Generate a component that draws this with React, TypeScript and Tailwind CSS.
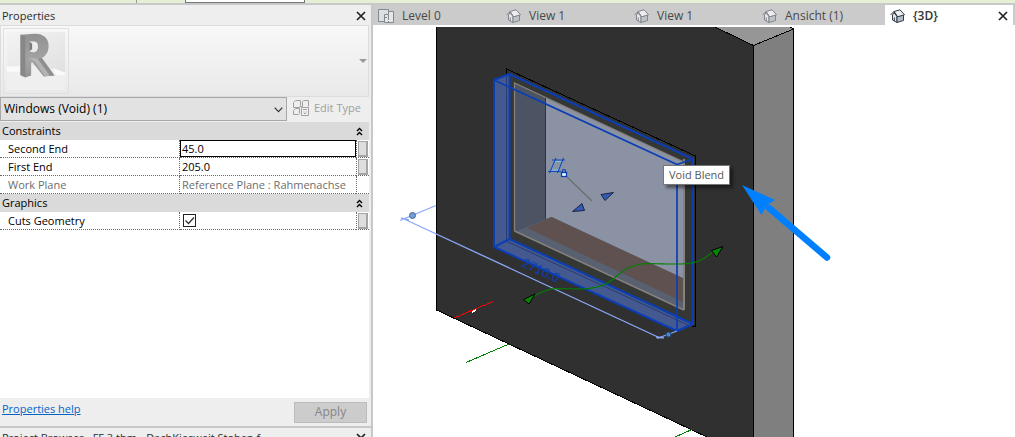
import { useId, useState } from "react";

type IconProps = { className?: string };

function CloseIcon({ className = "" }: IconProps) {
  return (
    <svg viewBox="0 0 10 10" className={`size-2.5 ${className}`} aria-hidden="true">
      <path d="M1 1l8 8M9 1L1 9" fill="none" stroke="currentColor" strokeWidth="1.7" />
    </svg>
  );
}

function RevitLogo() {
  return (
    <svg viewBox="0 0 66 66" className="size-full" aria-hidden="true">
      <defs>
        <linearGradient id="wall" x1="0" y1="0" x2="1" y2="1">
          <stop offset="0" stopColor="#f4f4f4" />
          <stop offset="1" stopColor="#e0e0e0" />
        </linearGradient>
        <linearGradient id="letter" x1="0" y1="0" x2="0" y2="1">
          <stop offset="0" stopColor="#919191" />
          <stop offset="0.6" stopColor="#a3a3a3" />
          <stop offset="1" stopColor="#929292" />
        </linearGradient>
      </defs>
      <rect x="3" y="3" width="60" height="60" fill="#efefef" />
      <path d="M3 3h60v42L36 38 3 40z" fill="url(#wall)" />
      <path d="M3 39l15-1v6H3zM50 40l13 5v3l-9-1z" fill="#fafafa" />
      <path
        fillRule="evenodd"
        d="M17 6l15-1c9 0 14 5 14 12 0 6-2 10-7 13l13 18-11 1-12-15-1 1v13l-6 2-5-2zM26 13v10l4 1c4 0 5-3 5-6s-1-5-5-5z"
        fill="url(#letter)"
      />
      <path d="M17 6l5 2v41l-5-2z" fill="#878787" />
      <path d="M25 30c6 2 9 6 11 10l6 9 5-1-12-17-5-1z" fill="#b3b3b3" />
      <path d="M39 30l13 18h-4L35 31z" fill="#8f8f8f" />
      <path d="M26 13l3 2v6l-3 2z" fill="#7a7a7a" />
    </svg>
  );
}

function EditTypeIcon() {
  return (
    <svg viewBox="0 0 17 17" className="size-[17px]" fill="none" stroke="#a0a0a0" aria-hidden="true">
      <path d="M.5 7.500v-5l2-2h5v5l-1 2zM7.500 6.500h2v-5l1-1h5v6M.5 14.500v-4l2-2h4v5l-1 1z" />
      <path d="M8.500 7.500h7v8h-7z" fill="#f2f2f2" />
      <path d="M10 9.500h4M10.500 12h1M13 12h1M11 13.500h2" />
    </svg>
  );
}

function PlanIcon() {
  return (
    <svg viewBox="0 0 16 14" className="h-3.5 w-4" fill="none" stroke="#85898e" aria-hidden="true">
      <path d="M.5.500h10v12H.500z" fill="#dcdfe2" />
      <path d="M6.500 5.500h4v-3h5v11h-9z" fill="#e4e6e8" />
      <path d="M10.500 6v7" strokeDasharray="2 1" />
      <path d="M7 8.500h4" strokeDasharray="2 1" />
    </svg>
  );
}

function HouseIcon({ active = false }: { active?: boolean }) {
  return (
    <svg
      viewBox="0 0 15 14"
      className={`h-3.5 w-[15px] ${active ? "text-[#343c47]" : "text-[#81858b]"}`}
      stroke="currentColor"
      strokeLinejoin="round"
      aria-hidden="true"
    >
      <path d="M2.500 6v5l4.500 2.500V7.500L4 3.500z" fill="#e3e6ea" />
      <path d="M7 7.500v6l6.500-2V6z" fill={active ? "#aebccb" : "#bcc3cb"} />
      <path d="M4 2.500L10 .8l4.500 5-7 2z" fill="#eceef0" />
      <path d="M.5 6L4 2.500 7.500 7.800" fill="none" />
      <path d="M4.300 12V8.500" fill="none" />
    </svg>
  );
}

function Collapse({ label }: { label: string }) {
  return (
    <button type="button" aria-label={label} className="block">
      <svg viewBox="0 0 7 9" className="h-[9px] w-[7px]" aria-hidden="true">
        <path d="M1 4l2.500-2.500L6 4M1 8l2.500-2.500L6 8" fill="none" stroke="#000" strokeWidth="1.400" />
      </svg>
    </button>
  );
}

function SectionRow({ title }: { title: string }) {
  return (
    <tr className="h-[18px] bg-[#dadada]">
      <th colSpan={2} scope="colgroup" className="p-0 pl-0.5 text-left font-normal">
        {title}
      </th>
      <td className="p-0 align-middle">
        <Collapse label={`Collapse ${title}`} />
      </td>
    </tr>
  );
}

type PropertyRowProps = {
  name: string;
  value?: string;
  selected?: boolean;
  readOnly?: boolean;
  checkbox?: boolean;
};

function PropertyRow({ name, value = "", selected, readOnly, checkbox }: PropertyRowProps) {
  const id = useId();
  const [text, setText] = useState(value);
  const [checked, setChecked] = useState(true);
  const cell = "border-b border-dotted border-[#6a6a6a] p-0";
  return (
    <tr className={`h-[18px] ${readOnly ? "text-[#6d6d6d]" : "text-black"}`}>
      <th scope="row" className={`${cell} border-r pl-2 text-left font-normal`}>
        <label htmlFor={id} className="block">{name}</label>
      </th>
      <td className={cell}>
        {checkbox ? (
          <span className="relative ml-[3px] block size-[13px]">
            <input
              id={id}
              type="checkbox"
              checked={checked}
              onChange={(e) => setChecked(e.target.checked)}
              className="block size-[13px] appearance-none border border-[#222] bg-white"
            />
            {checked && (
              <svg viewBox="0 0 13 13" className="pointer-events-none absolute inset-0 size-[13px]" aria-hidden="true">
                <path d="M2.500 6.500l3 3 5.500-6" fill="none" stroke="#333" strokeWidth="1.300" />
              </svg>
            )}
          </span>
        ) : (
          <input
            id={id}
            value={text}
            readOnly={readOnly}
            onChange={(e) => setText(e.target.value)}
            className={`block h-[17px] w-full border bg-white px-px outline-none ${
              selected ? "border-black" : "border-transparent"
            }`}
          />
        )}
      </td>
      <td className={`${cell} border-l`}>
        {!readOnly && (
          <button
            type="button"
            aria-label={`Associate ${name}`}
            className="mx-auto block h-4 w-2.5 border border-r-2 border-b-2 border-[#a5a5a5] bg-[#dedede]"
          />
        )}
      </td>
    </tr>
  );
}

function PropertiesPanel() {
  return (
    <section className="flex min-h-0 flex-1 flex-col bg-[#eeeeee]">
      <header className="flex h-5 items-center justify-between pt-0.5 pr-[5px] pl-0.5 text-[#2b2b2b]">
        <h2 className="text-[11px]">Properties</h2>
        <button type="button" aria-label="Close properties" className="text-[#222]">
          <CloseIcon />
        </button>
      </header>
      <div className="mr-0.5 flex h-[72px] items-center justify-between border border-[#dcdcdc] bg-gradient-to-b from-[#f8f8f8] to-[#e9e9e9] pl-0.5">
        <div className="size-[66px] border border-[#e0e0e0]">
          <RevitLogo />
        </div>
        <button type="button" aria-label="Type selector" className="pr-px">
          <svg viewBox="0 0 8 4" className="h-1 w-2" aria-hidden="true">
            <path d="M0 0h8L4 4z" fill="#999" />
          </svg>
        </button>
      </div>
      <div className="flex h-[25px] items-start">
        <div className="relative min-w-0 flex-1">
          <select
            aria-label="Element filter"
            className="block h-6 w-full appearance-none border border-[#a8a8a8] bg-[#e2e2e2] pl-[3px] text-black"
          >
            <option>Windows (Void) (1)</option>
          </select>
          <svg viewBox="0 0 9 6" className="pointer-events-none absolute top-[10px] right-1 h-1.5 w-[9px]" aria-hidden="true">
            <path d="M.7.700l3.800 4L8.300.700" fill="none" stroke="#333" strokeWidth="1.200" />
          </svg>
        </div>
        <button
          type="button"
          disabled
          className="flex h-[22px] w-[84px] items-center gap-1 pl-1.5 text-[11px] whitespace-nowrap text-[#a0a0a0]"
        >
          <EditTypeIcon />
          Edit Type
        </button>
      </div>
      <div className="mr-0.5 min-h-0 flex-1 overflow-hidden bg-white">
        <table className="w-full table-fixed border-separate border-spacing-0 text-[11px] leading-4 text-black">
          <colgroup>
            <col className="w-[180px]" />
            <col />
            <col className="w-[13px]" />
          </colgroup>
          <tbody>
            <SectionRow title="Constraints" />
            <PropertyRow name="Second End" value="45.0" selected />
            <PropertyRow name="First End" value="205.0" />
            <PropertyRow name="Work Plane" value="Reference Plane : Rahmenachse" readOnly />
            <SectionRow title="Graphics" />
            <PropertyRow name="Cuts Geometry" checkbox />
          </tbody>
        </table>
      </div>
      <footer className="flex h-7 items-center justify-between pr-1 pl-0.5">
        <a href="#help" className="-mt-1.5 text-[11px] text-[#0563c8] underline">
          Properties help
        </a>
        <button type="button" disabled className="h-[21px] w-[73px] border border-[#bcbcbc] bg-[#cccccc] text-[#868686]">
          Apply
        </button>
      </footer>
    </section>
  );
}

const tabs = ["Level 0", "View 1", "View 1", "Ansicht (1)", "{3D}"];

function ViewTabs() {
  return (
    <nav className="flex h-5 shrink-0 bg-[#cbcbcb] pr-0.5" aria-label="Open views">
      {tabs.map((tab, i) => {
        const active = i === tabs.length - 1;
        return (
          <div
            key={i}
            className={`flex min-w-0 flex-1 items-center justify-between pt-px pr-[5px] pl-[5px] ${
              active ? "bg-white font-semibold text-[#333]" : "text-[#4a4a4a]"
            }`}
          >
            <button type="button" className="flex items-center gap-2 whitespace-nowrap">
              {i === 0 ? <PlanIcon /> : <HouseIcon active={active} />}
              {tab}
            </button>
            {active && (
              <button type="button" aria-label="Close view" className="text-[#222]">
                <CloseIcon />
              </button>
            )}
          </div>
        );
      })}
    </nav>
  );
}

function Scene() {
  return (
    <svg
      viewBox="373 25 642 412"
      preserveAspectRatio="xMinYMin slice"
      className="block size-full"
      role="img"
      aria-label="Wall with a window opening cut by a void blend"
    >
      {/* wall */}
      <g shapeRendering="crispEdges">
        <path d="M436 27H715L753 45V437H707L436 310z" fill="#303030" />
        <path d="M715 27H791L793 29 753 45z" fill="#969696" />
        <path d="M753 45L793 29V437H753z" fill="#7f7f7f" />
        <path d="M436.500 27V310L707 437M715 27L753.500 45.500 793.500 29V437M753.500 45V437M790 27L793.500 29" fill="none" stroke="#000" />
      </g>

      {/* opening */}
      <path d="M509 74L693 159V325L509 239z" fill="#353735" />
      <path d="M515 84L684 162V310L515 231z" fill="#596171" />
      <path d="M515 84L546 98V219L515 232z" fill="#4c5463" />
      <path d="M546 98L684 162V279L552 217 546 219z" fill="#8b92a3" />
      <path d="M527 228L551 217 683 278V302z" fill="#5f514f" />
      <path d="M545.500 98V219" fill="none" stroke="#2e3441" shapeRendering="crispEdges" />
      <path d="M514.500 231V83L684 162" fill="none" stroke="#85817f" strokeWidth="1.300" />
      <path d="M684 159V310" fill="none" stroke="#85817f" strokeWidth="2" />
      <path d="M514.500 231L684 310" fill="none" stroke="#85817f" strokeWidth="1.500" />
      <path d="M506.500 78V69L695.500 156V326H692" fill="none" stroke="#000" shapeRendering="crispEdges" />

      {/* selected void */}
      <path d="M494 80L509 74V239L676 317 692 324 677 331 494 247z" fill="#43598f" />
      <path d="M506.500 74V240M506 241L688 325" fill="none" stroke="#2b3b6c" />
      <g fill="none" stroke="#0b3eb5" strokeLinejoin="round" strokeWidth="2">
        <path d="M494 80V247L677 331" />
        <path d="M494 80L509.500 74L693 159V324L677 331M509.500 74V239L693 324M509.500 239L494 247" />
        <path d="M494 80L677 164.500V331M677 164.500L693 159" strokeWidth="1.700" />
      </g>
      <text
        x="521"
        y="266"
        transform="rotate(25 521 266)"
        fill="#0b3eb5"
        fontSize="13"
        className="font-['Liberation_Sans',sans-serif]"
      >
        2710.0
      </text>

      {/* length dimension */}
      <g fill="none" stroke="#8aa9f8" strokeWidth="1.300">
        <path d="M400 220.500L436 205.500M401 218l8 2M404 219L660 338" />
        <path d="M657 338.500L677 331M656 337l8 1" />
      </g>
      <circle cx="412.500" cy="215.500" r="3" fill="#6f9fdf" stroke="#4d6180" />
      <circle cx="668.500" cy="334.500" r="2.500" fill="#4a86cf" stroke="#24446f" />

      {/* work plane glyph and flip controls */}
      <g fill="none">
        <path d="M555 161.500H562L558 170H551z" stroke="#7fc4e8" />
        <path d="M552 160H565M548 171.500H561M556 158L549.500 173M563.500 158L557.500 173" stroke="#1149b5" strokeWidth="1.100" />
        <path d="M567 177L592 201" stroke="#6c6d72" strokeWidth="1.300" />
      </g>
      <path d="M562.500 172v-1a1.500 1.500 0 013 0V172" fill="none" stroke="#0b3eb5" strokeWidth="1.200" />
      <rect x="561.500" y="172.500" width="5" height="4" fill="#dff" stroke="#0b3eb5" strokeWidth="1.300" />
      <path d="M601 194.500L613.500 192.500 605 200.500zM572.500 211.500L582 203.500 584.500 210.500z" fill="#3459b0" stroke="#1b2547" />

      {/* path curve */}
      <path
        d="M534 296C541 292 547 289 555 288.500L580 289C596 289 605 286 612 280C621 272 630 264 647 263.500C665 263.500 685 266 698 261.500C706 258 710 254 714 251"
        fill="none"
        stroke="#008000"
        strokeWidth="1.100"
      />
      <path d="M711.500 250.500L723 246.500 716.500 257zM523.500 299.500L535 294 529 304z" fill="#078307" stroke="#000" />

      {/* reference lines */}
      <g fill="none" shapeRendering="crispEdges">
        <path d="M454 318L493 301.500" stroke="#f00" />
        <path d="M472 312l4-2" stroke="#fff" strokeWidth="2" />
        <path d="M466 362.500L509 344M675 437L692 429.500" stroke="#008000" />
      </g>

      {/* annotation arrow */}
      <path d="M769 208L827 257.500" stroke="#0080ff" strokeWidth="6.500" strokeLinecap="round" />
      <path d="M742 185L775 200 767 205 761.500 215z" fill="#0080ff" />
    </svg>
  );
}

export default function App() {
  return (
    <div className="flex h-screen flex-col overflow-hidden bg-[#c8c8c8] font-['Open_Sans','Noto_Sans',sans-serif] text-xs">
      <div className="flex h-[3px] shrink-0 bg-[#e5efd6]">
        <div className="w-[137px] border-r border-[#999]" />
        <div className="ml-12 w-[120px] border border-t-0 border-[#777] bg-white" />
      </div>
      <main className="flex min-h-0 flex-1 gap-0.5 pt-0.5">
        <aside className="flex w-[371px] shrink-0 flex-col gap-0.5">
          <PropertiesPanel />
          <section className="h-[9px] shrink-0 overflow-hidden bg-[#eeeeee] text-[#2b2b2b]">
            <header className="flex items-center justify-between pt-0.5 pr-[5px] pl-0.5">
              <h2 className="text-[11px] leading-4 whitespace-nowrap">Project Browser - FF 3.thm - DachKiesweit Stoban f...</h2>
              <button type="button" aria-label="Close project browser" className="text-[#222]">
                <CloseIcon />
              </button>
            </header>
          </section>
        </aside>
        <div className="flex min-w-0 flex-1 flex-col">
          <ViewTabs />
          <div className="relative min-h-0 flex-1 overflow-hidden bg-white">
            <Scene />
            <div
              role="tooltip"
              className="absolute top-[140px] left-[290px] border border-[#767676] bg-white px-[5px] text-[11px] leading-[18px] whitespace-nowrap text-[#575757] shadow-[3px_3px_3px_rgba(0,0,0,0.45)]"
            >
              Void Blend
            </div>
          </div>
        </div>
      </main>
    </div>
  );
}
